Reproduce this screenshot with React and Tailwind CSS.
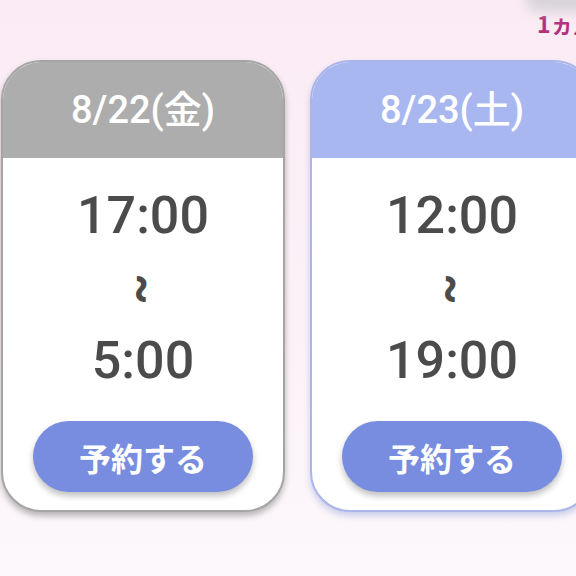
import React from 'react';

const SLOTS = [
  {
    date: '8/22(金)',
    from: '17:00',
    to: '5:00',
    head: 'bg-[#adadad]',
    card: 'border-[#a5a5a5] shadow-[0_4px_6px_rgba(0,0,0,0.28)]',
  },
  {
    date: '8/23(土)',
    from: '12:00',
    to: '19:00',
    head: 'bg-[#a9b7f0]',
    card: 'border-[#aab5ea] shadow-[0_4px_6px_rgba(90,110,200,0.3)]',
  },
];

const SlotCard = ({ slot }) => (
  <div className={`w-[284px] shrink-0 rounded-[40px] border-2 bg-white overflow-hidden flex flex-col ${slot.card}`}>
    <div className={`h-[96px] flex items-center justify-center ${slot.head}`}>
      <span className="text-[38px] leading-none text-white font-medium" style={{ fontFamily: "Roboto, 'Noto Sans CJK JP', sans-serif" }}>
        {slot.date}
      </span>
    </div>
    <div className="flex flex-col items-center pt-[32px] pb-[18px] text-[#4b4b4b]" style={{ fontFamily: "Roboto, 'Noto Sans CJK JP', sans-serif" }}>
      <span className="text-[52px] leading-none font-medium">{slot.from}</span>
      <div className="h-[93px] flex items-center justify-center">
        <span className="inline-block rotate-90 text-[48px] leading-none font-bold">~</span>
      </div>
      <span className="text-[52px] leading-none font-medium">{slot.to}</span>
      <button
        className="mt-[34px] w-[220px] h-[71px] rounded-full bg-[#788de0] text-white text-[32px] font-bold shadow-[0_4px_6px_rgba(0,0,0,0.25)]"
        style={{ fontFamily: "'Noto Sans CJK JP', sans-serif" }}
      >
        予約する
      </button>
    </div>
  </div>
);

const App = () => {
  return (
    <div className="w-[576px] h-[576px] overflow-hidden bg-gradient-to-b from-[#fbebf4] to-[#fcf8fb]">
      {/* top strip */}
      <div className="relative h-[60px]">
        <div className="absolute -top-[14px] right-[-20px] w-[70px] h-[26px] rounded-full bg-[#cfcfd2] blur-[6px] opacity-80" />
        <div
          className="pl-[537px] pt-[12px] whitespace-nowrap overflow-hidden text-[23px] leading-none font-bold text-[#b3307e]"
          style={{ fontFamily: "'Noto Sans CJK JP', sans-serif" }}
        >
          1ヵ月前から
        </div>
      </div>

      {/* cards */}
      <div className="flex gap-[25px] pl-[1px]">
        {SLOTS.map(s => (
          <SlotCard key={s.date} slot={s} />
        ))}
      </div>
    </div>
  );
};

export default App;
